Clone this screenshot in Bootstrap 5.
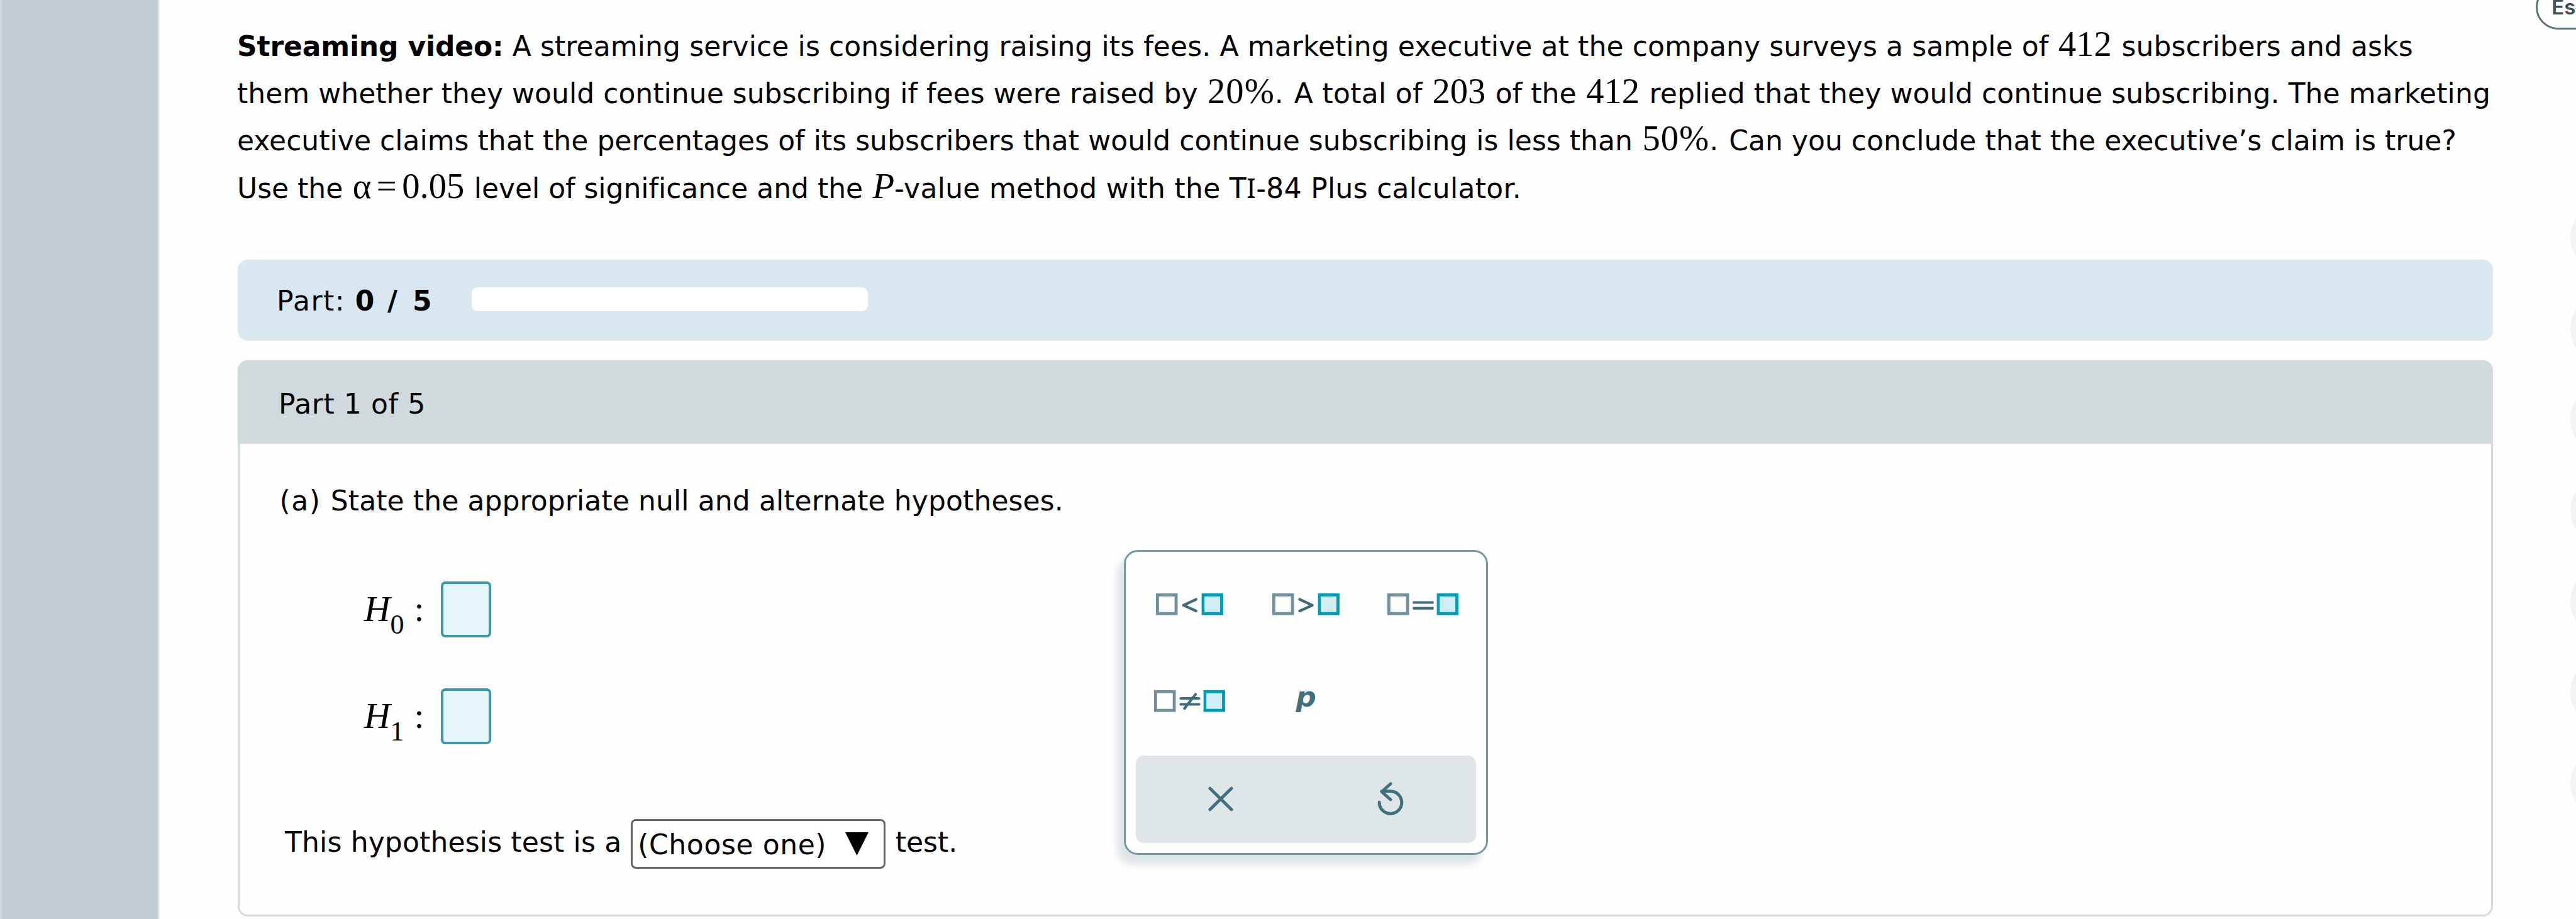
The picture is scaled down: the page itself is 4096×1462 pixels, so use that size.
<!DOCTYPE html>
<html lang="en">
<head>
  <meta charset="UTF-8" />
  <meta name="viewport" content="width=device-width, initial-scale=1" />
  <title>Hypothesis Test</title>
  <link
    href="https://cdn.jsdelivr.net/npm/bootstrap@5.3.3/dist/css/bootstrap.min.css"
    rel="stylesheet"
  />
  <style>
    body {
      width: 4096px;
      height: 1462px;
      background: #fefefe;
      color: #000;
      font-family: "DejaVu Sans", sans-serif;
      font-size: 44px;
      font-variant-ligatures: none;
      line-height: 60px;
      white-space: nowrap;
    }

    .side-strip {
      width: 252px;
      background: #c1cdd3;
      border-left: 3px solid #cbd5da;
    }

    .content {
      width: 3712px;
      padding: 35.6px 0 0 126px;
    }

    .question {
      line-height: 75.3px;
      margin-left: -1px;
      margin-bottom: 75.2px;
    }

    .question b { letter-spacing: -0.15px; }

    .ls-0 { letter-spacing: -0.03px; }
    .ls-1 { letter-spacing: 0.03px; }
    .ls-2 { letter-spacing: 0.1px; }
    .ls-3 { letter-spacing: 0.15px; }
    .ls-4 { letter-spacing: 0.28px; }
    .ls-5 { letter-spacing: 0.3px; }
    .ls-6 { letter-spacing: 0.6px; }
    .ls-7 { letter-spacing: 1.5px; }

    .math {
      font-family: "Liberation Serif", serif;
      font-size: 56.6px;
      line-height: 1;
      letter-spacing: 0;
      margin: 0 1.5px;
    }

    .math.percent {
      letter-spacing: 1px;
      margin-right: 0;
    }

    .stop { letter-spacing: 1.5px; }
    .eq { margin: 0 8.5px; }
    .serif-i { font-family: "Noto Sans", sans-serif; }

    .progress-bar-box {
      height: 129px;
      padding-left: 62px;
      background: #d9e7f0;
      border-radius: 16px;
      margin-bottom: 31.5px;
    }

    .part-label { padding-top: 4px; }
    .slash { margin: 0 8.5px 0 5.5px; }

    .track {
      width: 630px;
      height: 38px;
      margin-left: 63.5px;
      margin-bottom: 2px;
      background: #fff;
      border-radius: 9px;
    }

    .part-card {
      height: 884.5px;
      border: 3px solid #d1dadd;
      border-radius: 16px;
      background: transparent;
      color: #000;
    }

    .part-head {
      height: 129.5px;
      padding-left: 62px;
      padding-top: 4px;
      background: #d1dadd;
      border-radius: 12px 12px 0 0;
    }

    .part-body { padding: 61.5px 0 0 63.5px; }
    .work { width: 1342.5px; padding-top: 98px; }

    .hyp {
      height: 89px;
      margin-bottom: 81px;
      padding-left: 134.5px;
      font-family: "Liberation Serif", serif;
      font-size: 57.5px;
      line-height: 88px;
    }

    .hyp .idx {
      font-size: 44px;
      line-height: 0;
      vertical-align: -19.6px;
    }

    .hyp .colon { margin-left: 16px; }

    .answer {
      width: 79.5px;
      height: 89px;
      margin-left: 26.5px;
      border: 4px solid #3c98aa;
      border-radius: 7px;
      background: #e6f5f9;
    }

    .conclusion {
      margin-top: 119px;
      padding-left: 8.5px;
      line-height: 74px;
    }

    .choose {
      width: 405px;
      height: 78.6px;
      margin: 0 16px 0 14.5px;
      padding-left: 8.5px;
      border: 3px solid #666;
      border-radius: 8px;
      line-height: 76.4px;
      background: #fff;
    }

    .choose svg { margin: 17.5px 0 0 30px; }

    .toolbox {
      width: 579.2px;
      height: 484.7px;
      margin-top: 48px;
      border: 3px solid #7599a2;
      border-radius: 22px;
      background: #fefefe;
      box-shadow: -10px 15px 13px rgba(67, 108, 123, 0.18);
    }

    .keys {
      display: grid;
      grid-template: repeat(2, 154px) / repeat(3, 185.5px);
      justify-content: center;
      padding-top: 6px;
    }

    .key-p {
      padding-bottom: 14px;
      color: #436f7f;
      font: italic 700 45px "DejaVu Sans", sans-serif;
    }

    .tool-foot {
      height: 138.6px;
      margin: 9.5px 15.9px 0;
      border-radius: 13px;
      background: #dfe6e8;
    }

    .rail { width: 132px; height: 1462px; }

    .lang {
      width: 150px;
      height: 71px;
      margin: -23.6px 0 272.6px 67.8px;
      padding: 0 0 0 22.5px;
      border: 3px solid #5f7275;
      border-radius: 36px;
      color: #444f51;
      font: 600 33px/65px "Inter", sans-serif;
    }

    .dot {
      width: 116px;
      height: 116px;
      margin: 0 0 28.7px 122.5px;
      border-radius: 50%;
      background: #f2f4f4;
    }
  </style>
</head>

<body class="d-flex overflow-hidden">
  <svg class="d-none">
    <symbol id="box" viewBox="0 0 35 35"><rect x="2.4" y="2.4" width="29.7" height="29.7" fill="#fff" stroke="#70919b" stroke-width="4.8" /></symbol>
    <symbol id="fill" viewBox="0 0 35 35"><rect x="2.4" y="2.4" width="29.7" height="29.7" fill="#ceeef3" stroke="#009bb5" stroke-width="4.8" /></symbol>
  </svg>

  <aside class="side-strip flex-shrink-0"></aside>

  <main class="content flex-shrink-0">
    <div class="question">
      <div class="ls-2"><b>Streaming video:</b> A streaming service is considering raising its fees. A marketing executive at the company surveys a sample of <span class="math">412</span> subscribers and asks</div>
      <div class="ls-1">them whether they would continue subscribing if fees were raised by <span class="math percent">20%</span><span class="stop">. </span><span class="ls-5">A total of</span> <span class="math">203</span> of the <span class="math">412</span> <span class="ls-2">replied that they would continue subscribing. The marketing</span></div>
      <div class="ls-1">executive claims that the percentages of its subscribers that would continue subscribing is less than <span class="math percent">50%</span><span class="stop">. </span>Can you conclude that the executive’s claim is true?</div>
      <div class="ls-0">Use the <span class="math">α<span class="eq">=</span>0.05</span> level of significance and the <i class="math me-0">P</i><span class="ls-4">-value method with the T<span class="serif-i">I</span>-84 Plus calculator.</span></div>
    </div>

    <div class="progress-bar-box d-flex align-items-center">
      <div class="part-label"><span class="ls-7">Part: </span><b>0<span class="slash"> / </span>5</b></div>
      <div class="track"></div>
    </div>

    <section class="card part-card">
      <div class="part-head d-flex align-items-center ls-6">Part 1 of 5</div>
      <div class="part-body">
        <div class="ls-2"><span class="ls-7">(a) </span>State the appropriate null and alternate hypotheses.</div>
        <div class="d-flex align-items-start">
          <div class="work">
            <div class="hyp d-flex">
              <div><i>H</i><span class="idx">0</span><span class="colon">:</span></div>
              <div class="answer"></div>
            </div>
            <div class="hyp d-flex">
              <div><i>H</i><span class="idx">1</span><span class="colon">:</span></div>
              <div class="answer"></div>
            </div>
            <div class="conclusion d-flex align-items-start">
              <span class="ls-3">This hypothesis test is a</span>
              <div class="choose d-flex align-items-start">
                <span class="ls-6">(Choose one)</span>
                <svg width="37" height="37" viewBox="0 0 37 37"><path d="M0 0h37L18.5 37z" /></svg>
              </div>
              <span>test.</span>
            </div>
          </div>

          <div class="toolbox">
            <div class="keys">
              <div class="d-flex align-items-center justify-content-center">
                <svg width="107" height="35" fill="none" stroke="#3f6b7b" stroke-width="4.2" stroke-linecap="round" stroke-linejoin="round"><use href="#box" width="35" height="35" stroke-linejoin="miter" /><path d="M64 9.5L43.8 18.8L64 28" /><use href="#fill" x="72.4" width="35" height="35" stroke-linejoin="miter" /></svg>
              </div>
              <div class="d-flex align-items-center justify-content-center">
                <svg width="107" height="35" fill="none" stroke="#3f6b7b" stroke-width="4.2" stroke-linecap="round" stroke-linejoin="round"><use href="#box" width="35" height="35" stroke-linejoin="miter" /><path d="M43.5 9.5L63.7 18.8L43.5 28" /><use href="#fill" x="72.4" width="35" height="35" stroke-linejoin="miter" /></svg>
              </div>
              <div class="d-flex align-items-center justify-content-center">
                <svg width="113" height="35" fill="none" stroke="#3f6b7b" stroke-width="4.2"><use href="#box" width="35" height="35" /><path d="M40.5 14.5H73.5M40.5 23.7H73.5" /><use href="#fill" x="78.4" width="35" height="35" /></svg>
              </div>
              <div class="d-flex align-items-center justify-content-center">
                <svg width="113" height="35" fill="none" stroke="#3f6b7b" stroke-width="4.2"><use href="#box" width="35" height="35" /><path d="M42.5 13H71.5M42.5 22.5H71.5M48.5 29L66 6.5" stroke-linecap="round" /><use href="#fill" x="78.4" width="35" height="35" /></svg>
              </div>
              <div class="key-p d-flex align-items-center justify-content-center">p</div>
            </div>
            <div class="tool-foot d-flex align-items-center justify-content-around">
              <svg width="40" height="40" viewBox="0 0 40 40" fill="none" stroke="#426f7e" stroke-width="5" stroke-linecap="round"><path d="M3 3.2L37 36.8M37 3.2L3 36.8" /></svg>
              <svg width="42" height="54" viewBox="0 0 42 54" fill="none" stroke="#426f7e" stroke-width="5" stroke-linecap="round" stroke-linejoin="round"><path d="M3.2 32.3A17.8 17.8 0 1 0 21 14.8H7M21 3L7 15.5L21 28" /></svg>
            </div>
          </div>
        </div>
      </div>
    </section>
  </main>

  <aside class="rail flex-shrink-0 overflow-hidden">
    <div class="lang">Es</div>
    <div class="dot"></div>
    <div class="dot"></div>
    <div class="dot"></div>
    <div class="dot"></div>
    <div class="dot"></div>
    <div class="dot"></div>
    <div class="dot"></div>
  </aside>

  <script src="https://cdn.jsdelivr.net/npm/bootstrap@5.3.3/dist/js/bootstrap.bundle.min.js"></script>
</body>
</html>
